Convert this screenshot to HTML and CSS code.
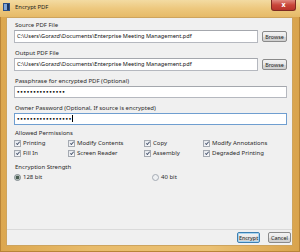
FILE: index.html
```html
<!DOCTYPE html>
<html>
  <head>
    <meta charset="UTF-8" />
    <title>Encrypt PDF</title>
    <link rel="stylesheet" href="styles.css">
  </head>
  <body>
    <div class="window">
      <div class="titlebar">
        <svg class="app-icon" width="7" height="8" viewBox="0 0 7 8">
          <rect x="0" y="0" width="7" height="8" fill="#2b4f86" />
          <rect x="1" y="1" width="3" height="6" fill="#7fa6d8" />
          <rect x="4" y="1" width="2" height="6" fill="#1c355d" />
        </svg>
        <span class="title">Encrypt PDF</span>
        <div class="close">x</div>
      </div>

      <div class="client">
        <div class="panel">
          <div class="field">
            <label>Source PDF File</label>
            <div class="file-row">
              <div class="input">C:\Users\Gorazd\Documents\Enterprise Meeting Management.pdf</div>
              <button class="btn browse">Browse</button>
            </div>
          </div>

          <div class="field">
            <label>Output PDF File</label>
            <div class="file-row">
              <div class="input">C:\Users\Gorazd\Documents\Enterprise Meeting Management.pdf</div>
              <button class="btn browse">Browse</button>
            </div>
          </div>

          <div class="field">
            <label>Passphrase for encrypted PDF (Optional)</label>
            <div class="input password">&#9679;&#9679;&#9679;&#9679;&#9679;&#9679;&#9679;&#9679;&#9679;&#9679;&#9679;&#9679;&#9679;&#9679;&#9679;</div>
          </div>

          <div class="field">
            <label>Owner Password (Optional, If source is encrypted)</label>
            <div class="input password focused">&#9679;&#9679;&#9679;&#9679;&#9679;&#9679;&#9679;&#9679;&#9679;&#9679;&#9679;&#9679;&#9679;&#9679;&#9679;&#9679;&#9679;<span class="caret"></span></div>
          </div>

          <div class="section-title">Allowed Permissions</div>
          <div class="perms">
            <div class="opt"><span class="check"></span>Printing</div>
            <div class="opt"><span class="check"></span>Modify Contents</div>
            <div class="opt"><span class="check"></span>Copy</div>
            <div class="opt"><span class="check"></span>Modify Annotations</div>
            <div class="opt"><span class="check"></span>Fill In</div>
            <div class="opt"><span class="check"></span>Screen Reader</div>
            <div class="opt"><span class="check"></span>Assembly</div>
            <div class="opt"><span class="check"></span>Degraded Printing</div>
          </div>

          <div class="section-title strength">Encryption Strength</div>
          <div class="radios">
            <div class="opt"><span class="radio on"></span>128 bit</div>
            <div class="opt"><span class="radio"></span>40 bit</div>
          </div>
        </div>

        <div class="footer">
          <button class="btn default">Encrypt</button>
          <button class="btn">Cancel</button>
        </div>
      </div>
    </div>
  </body>
</html>
```

FILE: styles.css
```css
html,
body {
  margin: 0;
  width: 300px;
  height: 252px;
  overflow: hidden;
}
body {
  font-family: "Noto Sans", "Open Sans", sans-serif;
  font-size: 6px;
  color: #2a2a2a;
}
.window {
  display: flex;
  flex-direction: column;
  height: 252px;
  background: linear-gradient(90deg, #dca74f 0%, #e8bb6a 30%, #eac073 70%, #d9a34c 100%);
  box-shadow: inset 0 0 0 1px #b98437;
}
.titlebar {
  position: relative;
  display: flex;
  align-items: center;
  height: 17px;
  padding-left: 3px;
  background: linear-gradient(180deg, #f3dba2 0%, #edc87e 50%, #e6ba68 100%);
}
.app-icon {
  margin-right: 5px;
  margin-top: -3px;
}
.title {
  font-size: 5.9px;
  color: #222;
  margin-top: -3px;
}
.close {
  position: absolute;
  top: 0;
  right: 4px;
  width: 23px;
  height: 10px;
  background: linear-gradient(180deg, #e08b80 0%, #c9463a 50%, #b8342a 100%);
  border: 1px solid #7e2a22;
  border-top: none;
  border-radius: 0 0 3px 3px;
  color: #fff;
  font-size: 7px;
  font-weight: bold;
  line-height: 9px;
  text-align: center;
}
.client {
  flex: 1;
  display: flex;
  flex-direction: column;
  margin: 0 7px 6px 6px;
  background: #f0f0f0;
  border: 1px solid #cda45e;
}
.panel {
  flex: 1;
  padding: 3px 5px 0 7px;
}
.field {
  margin-bottom: 6px;
}
.field label {
  display: block;
  line-height: 8px;
  margin-bottom: 1px;
  padding-left: 1px;
}
.file-row {
  display: flex;
  align-items: center;
  gap: 4px;
}
.input {
  flex: 1;
  height: 11px;
  line-height: 11px;
  padding: 0 2px;
  background: #fff;
  border: 1px solid #b5b8bf;
  border-top-color: #a4a7ad;
  color: #111;
  font-size: 5.6px;
  white-space: nowrap;
  overflow: hidden;
}
.input.password {
  height: 10px;
  line-height: 10px;
  font-size: 4.2px;
  letter-spacing: 0.7px;
}
.input.focused {
  border-color: #6f9ed0;
}
.caret {
  display: inline-block;
  width: 1px;
  height: 7px;
  background: #000;
  vertical-align: middle;
}
.btn {
  height: 11px;
  padding: 0;
  font-family: inherit;
  font-size: 5.4px;
  color: #222;
  background: linear-gradient(180deg, #f3f3f3 0%, #e8e8e8 50%, #d8d8d8 51%, #cfcfcf 100%);
  border: 1px solid #8a8a8a;
  border-radius: 2px;
}
.browse {
  width: 25px;
}
.section-title {
  line-height: 8px;
  margin-top: -2px;
  padding-left: 1px;
}
.perms {
  display: grid;
  grid-template-columns: 54px 76px 59px 1fr;
  margin-top: 1px;
}
.opt {
  display: flex;
  align-items: center;
  height: 10px;
}
.check {
  position: relative;
  width: 5px;
  height: 5px;
  margin-right: 2px;
  background: linear-gradient(135deg, #e2e5ea, #fbfbfc);
  border: 1px solid #a4a9b1;
}
.check::after {
  content: "";
  position: absolute;
  left: 1.6px;
  top: 0.2px;
  width: 1.2px;
  height: 3px;
  border: solid #4a5670;
  border-width: 0 0.8px 0.8px 0;
  transform: rotate(40deg);
}
.strength {
  margin-top: 5px;
}
.radios {
  display: grid;
  grid-template-columns: 138px 1fr;
  margin-top: 1px;
}
.radio {
  width: 5px;
  height: 5px;
  margin-right: 2px;
  border-radius: 50%;
  border: 1px solid #a3aab3;
  background: #eef0f2;
}
.radio.on {
  background: radial-gradient(circle, #4a5e52 0 45%, #c9d3cc 60%);
  border-color: #7a848a;
}
.footer {
  display: flex;
  justify-content: flex-end;
  gap: 8px;
  padding: 2px 1px 2px 0;
  border-top: 1px solid #dadada;
}
.footer .btn {
  width: 23px;
}
.footer .default {
  border-color: #3c7fb1;
  box-shadow: inset 0 0 0 1px #a8d4f0;
}
```
